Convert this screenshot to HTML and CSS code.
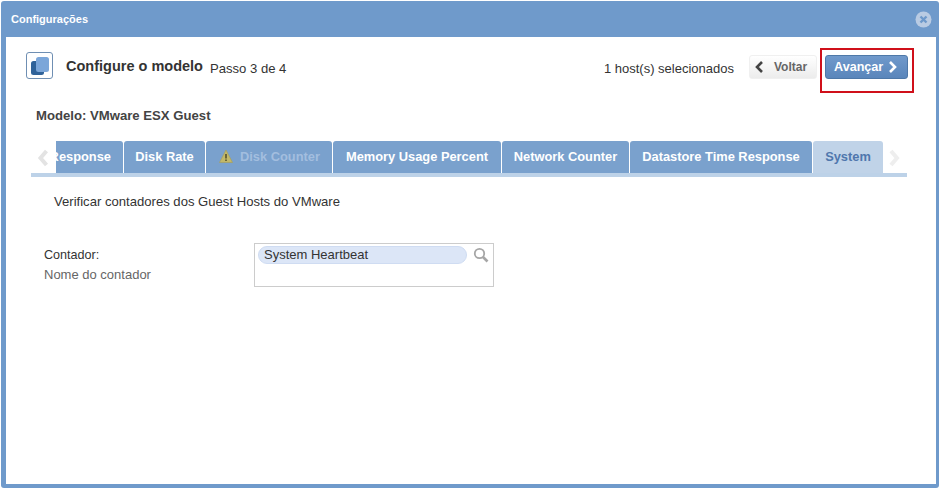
FILE: index.html
```html
<!DOCTYPE html>
<html lang="pt">
<head>
<meta charset="utf-8">
<title>Configurações</title>
<link rel="stylesheet" href="styles.css">
</head>
<body>
<div class="dialog">
  <header class="titlebar">
    <span class="title">Configurações</span>
    <svg class="close" width="17" height="17" viewBox="0 0 17 17"><circle cx="8.5" cy="8.5" r="8" fill="#b9cbe3"/><path d="M5.5 5.5l6 6M11.5 5.5l-6 6" stroke="#6e99cb" stroke-width="2.4" fill="none"/></svg>
  </header>
  <main class="body">
    <div class="wizard">
      <span class="logo">
        <svg width="18" height="18" viewBox="0 0 18 18"><rect x="0" y="4" width="13" height="14" rx="2.5" fill="#2f6299"/><rect x="5" y="0" width="13" height="15" rx="2.5" fill="#7ba6d9"/></svg>
      </span>
      <h1 class="wizard-title">Configure o modelo</h1>
      <span class="step">Passo 3 de 4</span>
      <span class="hosts">1 host(s) selecionados</span>
      <button class="btn back"><svg width="10" height="12" viewBox="0 0 10 12"><path d="M8 1L3 6l5 5" fill="none" stroke="#444" stroke-width="2.6"/></svg>Voltar</button>
      <span class="highlight">
        <button class="btn next">Avançar<svg width="10" height="12" viewBox="0 0 10 12"><path d="M2 1l5 5-5 5" fill="none" stroke="#fff" stroke-width="2.6"/></svg></button>
      </span>
    </div>
    <h2 class="model">Modelo: VMware ESX Guest</h2>
    <div class="tabbar">
      <svg class="arrow prev" width="14" height="18" viewBox="0 0 14 18"><path d="M10 2L4 9l6 7" fill="none" stroke="#e3e3e3" stroke-width="4"/></svg>
      <div class="tabs">
        <div class="tabs-track">
          <span class="tab first">Response</span>
          <span class="tab">Disk Rate</span>
          <span class="tab warn"><svg width="14" height="14" viewBox="0 0 14 14"><path d="M7 1L13.5 13.500H.5z" fill="#c2b868" stroke="#a89e55" stroke-width=".6"/><path d="M7 5v4.500M7 10.500v1.500" stroke="#4d4a2a" stroke-width="1.500"/></svg>Disk Counter</span>
          <span class="tab">Memory Usage Percent</span>
          <span class="tab">Network Counter</span>
          <span class="tab">Datastore Time Response</span>
          <span class="tab active">System</span>
        </div>
      </div>
      <svg class="arrow following" width="14" height="18" viewBox="0 0 14 18"><path d="M4 2l6 7-6 7" fill="none" stroke="#eeeeee" stroke-width="4"/></svg>
    </div>
    <p class="desc">Verificar contadores dos Guest Hosts do VMware</p>
    <div class="field">
      <div class="labels">
        <div class="label">Contador:</div>
        <div class="hint">Nome do contador</div>
      </div>
      <div class="picker">
        <span class="chip">System Heartbeat</span>
        <svg class="search" width="16" height="16" viewBox="0 0 16 16"><circle cx="6.500" cy="6.500" r="4.700" fill="none" stroke="#a6a6a6" stroke-width="1.800"/><path d="M10 10l4.500 4.500" stroke="#a6a6a6" stroke-width="2.600"/></svg>
      </div>
    </div>
  </main>
</div>
</body>
</html>
```
FILE: styles.css
```css
* { box-sizing: border-box; }
html, body { margin: 0; height: 100%; background: #fff; }
body { padding: 1px 0 1px 1px; overflow: hidden; font-family: "Liberation Sans", Arial, sans-serif; color: #333; }
.dialog { height: 487px; width: 938px; display: flex; flex-direction: column; background: #6f9acb; border-radius: 3px; padding: 0 3px 4px 5px; }
.titlebar { height: 36px; flex: none; display: flex; align-items: center; justify-content: space-between; padding: 0 0 0 5px; }
.title { color: #fff; font-size: 11px; font-weight: bold; }
.close { margin: 0 4px 0 0; }
.body { flex: 1; background: #fff; padding: 15px 0 0 20px; min-height: 0; }
.wizard { display: flex; align-items: center; height: 27px; }
.logo { width: 27px; height: 27px; border: 1px solid #6f8fb3; border-radius: 3px; display: flex; align-items: center; justify-content: center; margin-right: 13px; }
.wizard-title { margin: 0; font-size: 14.500px; font-weight: bold; color: #333; }
.step { font-size: 13.100px; color: #333; margin: 5px 0 0 7px; }
.hosts { font-size: 13px; color: #333; margin: 5px 0 0 auto; }
.btn { font: bold 12px "Liberation Sans", Arial, sans-serif; height: 24px; border-radius: 3px; display: inline-flex; align-items: center; padding: 0; }
.back { width: 68px; margin-left: 15px; margin-top: 3px; gap: 10px; padding-left: 4px; color: #666; background: linear-gradient(#fff, #ececec); border: 1px solid #f0f0f0; }
.highlight { margin-left: 3px; margin-right: 22px; border: 2px solid #d0101a; width: 94px; height: 45px; display: flex; align-items: center; justify-content: flex-start; margin-top: 10px; padding: 0 0 7px 3px; }
.next { width: 83px; gap: 5px; padding-left: 8px; color: #fff; font-size: 12.600px; background: linear-gradient(#7099cb, #5a86bb); border: 1px solid #4e78a8; }
.model { margin: 29px 0 0 10px; font-size: 13.150px; font-weight: bold; color: #444; line-height: 16px; }
.tabbar { display: flex; align-items: flex-start; margin: 17px 28px 0 5px; width: 876px; height: 36px; background: linear-gradient(#fff 0, #fff 32px, #bdd2e8 32px); position: relative; }
.arrow { flex: none; margin-top: 8px; }
.arrow.prev { width: 25px; background: #fff; height: 18px; }
.arrow.following { margin-left: 4px; }
.tabs { width: 827px; flex: none; overflow: hidden; height: 32px; }
.tabs-track { display: grid; grid-template-columns: 83px 81px 126px 168px 127px 182px 70px; gap: 1px; margin-left: -16px; width: 843px; }
.tab { height: 32px; padding: 0 0 2px; background: #7aa1cd; color: #fff; font-size: 12.850px; font-weight: bold; border-radius: 3px 3px 0 0; display: flex; align-items: center; justify-content: center; gap: 7px; white-space: nowrap; }
.tab.first { justify-content: flex-end; padding-right: 12px; }
.tab.warn { color: #a3bedf; justify-content: flex-start; padding-left: 13px; }
.tab.active { background: #c0d3e8; color: #4f77ad; }
.desc { margin: 17px 0 0 28px; font-size: 13.100px; color: #333; line-height: 16px; }
.field { display: flex; margin: 33px 0 0 18px; align-items: flex-start; }
.labels { width: 210px; padding-top: 3px; font-size: 13px; line-height: 19px; }
.label { color: #333; font-size: 12.600px; }
.hint { color: #666; }
.picker { width: 240px; height: 44px; border: 1px solid #ccc; display: flex; align-items: flex-start; padding: 2px 2px 0 3px; gap: 6px; }
.chip { width: 209px; height: 18px; background: #dce6f7; border: 1px solid #cfdcf2; border-radius: 9px; font-size: 13px; line-height: 15px; padding-left: 5px; color: #333; }
.search { margin-top: 1px; }
```
